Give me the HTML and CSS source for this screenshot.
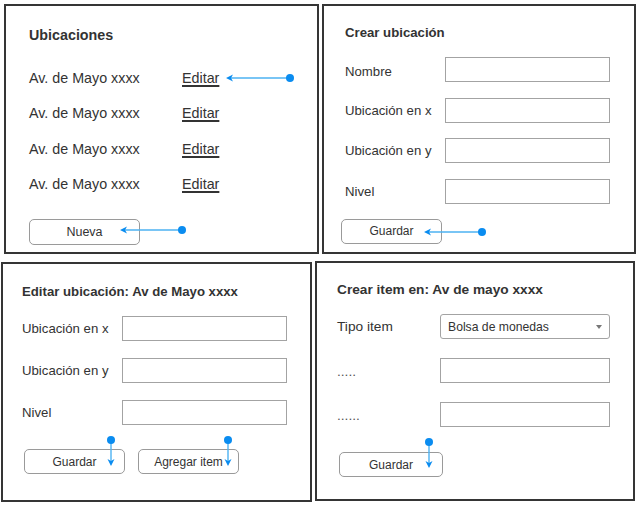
FILE: index.html
```html
<!DOCTYPE html>
<html lang="es">
<head>
  <meta charset="UTF-8">
  <meta name="viewport" content="width=device-width, initial-scale=1.0">
  <title>Ubicaciones — bocetos</title>
  <link rel="stylesheet" href="styles.css">
</head>
<body>
  <div class="board">
    <div class="row row-top">
      <!-- Listado -->
      <section class="panel panel-list">
        <h2 class="panel-title">Ubicaciones</h2>
        <ul class="place-list">
          <li><span>Av. de Mayo xxxx</span><a href="#">Editar</a></li>
          <li><span>Av. de Mayo xxxx</span><a href="#">Editar</a></li>
          <li><span>Av. de Mayo xxxx</span><a href="#">Editar</a></li>
          <li><span>Av. de Mayo xxxx</span><a href="#">Editar</a></li>
        </ul>
        <button class="btn btn-new">Nueva</button>
        <svg class="arrow arrow-edit" width="70" height="10" viewBox="0 0 70 10">
          <line x1="7" y1="5" x2="66" y2="5"/>
          <polygon points="2,5 9,1.5 7,5 9,8.5"/>
          <circle cx="66" cy="5" r="4"/>
        </svg>
        <svg class="arrow arrow-new" width="68" height="10" viewBox="0 0 68 10">
          <line x1="7" y1="5" x2="64" y2="5"/>
          <polygon points="2,5 9,1.5 7,5 9,8.5"/>
          <circle cx="64" cy="5" r="4"/>
        </svg>
      </section>

      <!-- Alta -->
      <section class="panel panel-create">
        <h2 class="panel-title">Crear ubicación</h2>
        <div class="form-grid">
          <label class="first">Nombre</label><input type="text">
          <label>Ubicación en x</label><input type="text">
          <label>Ubicación en y</label><input type="text">
          <label>Nivel</label><input type="text">
        </div>
        <button class="btn btn-save">Guardar</button>
        <svg class="arrow arrow-save" width="64" height="10" viewBox="0 0 64 10">
          <line x1="7" y1="5" x2="60" y2="5"/>
          <polygon points="2,5 9,1.5 7,5 9,8.5"/>
          <circle cx="60" cy="5" r="4"/>
        </svg>
      </section>
    </div>

    <div class="row row-bottom">
      <!-- Edición -->
      <section class="panel panel-edit">
        <h2 class="panel-title">Editar ubicación: Av de Mayo xxxx</h2>
        <div class="form-grid">
          <label>Ubicación en x</label><input type="text">
          <label>Ubicación en y</label><input type="text">
          <label>Nivel</label><input type="text">
        </div>
        <div class="actions">
          <button class="btn">Guardar</button>
          <button class="btn">Agregar item</button>
        </div>
        <svg class="arrow arrow-down arrow-edit-save" width="10" height="32" viewBox="0 0 10 32">
          <line x1="5" y1="4" x2="5" y2="25"/>
          <polygon points="5,30 1.5,23 5,25 8.5,23"/>
          <circle cx="5" cy="4" r="4"/>
        </svg>
        <svg class="arrow arrow-down arrow-add-item" width="10" height="32" viewBox="0 0 10 32">
          <line x1="5" y1="4" x2="5" y2="25"/>
          <polygon points="5,30 1.5,23 5,25 8.5,23"/>
          <circle cx="5" cy="4" r="4"/>
        </svg>
      </section>

      <!-- Item -->
      <section class="panel panel-item">
        <h2 class="panel-title">Crear item en: Av de mayo xxxx</h2>
        <div class="form-grid">
          <label>Tipo item</label>
          <div class="select"><span>Bolsa de monedas</span><i class="caret"></i></div>
          <label class="muted">.....</label><input type="text">
          <label class="muted">......</label><input type="text">
        </div>
        <button class="btn btn-item">Guardar</button>
        <svg class="arrow arrow-down arrow-item-save" width="10" height="32" viewBox="0 0 10 32">
          <line x1="5" y1="4" x2="5" y2="25"/>
          <polygon points="5,30 1.5,23 5,25 8.5,23"/>
          <circle cx="5" cy="4" r="4"/>
        </svg>
      </section>
    </div>
  </div>
</body>
</html>
```

FILE: styles.css
```css
body {
  margin: 0;
  background: #fff;
  color: #333;
  font-family: 'Liberation Sans', Arial, sans-serif;
}
.board {
  display: flex;
  flex-direction: column;
  padding-top: 4px;
}
.row {
  display: flex;
  gap: 3px;
  align-items: flex-start;
}
.row-top {
  margin-left: 4px;
}
.row-bottom {
  margin-left: 1px;
  margin-top: 8px;
}
.panel {
  position: relative;
  box-sizing: border-box;
  border: 2px solid #353535;
  background: #fff;
}
.panel-title {
  margin: 0;
  font-size: 13.2px;
  font-weight: bold;
  line-height: 18px;
  color: #333;
}

/* listado */
.panel-list {
  width: 315px;
  height: 250px;
  padding: 19px 0 0 23px;
}
.panel-list .panel-title {
  font-size: 14.3px;
  line-height: 20px;
}
.place-list {
  list-style: none;
  margin: 16px 0 0;
  padding: 0;
}
.place-list li {
  display: grid;
  grid-template-columns: 153px auto;
  font-size: 14.3px;
  line-height: 35.3px;
}
.place-list a {
  color: #333;
  text-decoration: underline;
  text-decoration-thickness: 1.5px;
  text-underline-offset: 2px;
}

/* formularios */
.form-grid {
  display: grid;
  align-items: center;
  margin-top: 15px;
  font-size: 13.2px;
}
.form-grid input {
  box-sizing: border-box;
  height: 25px;
  margin: 0;
  border: 1px solid #a3a3a3;
  border-radius: 0;
  background: #fff;
}
.form-grid .first {
  padding-top: 4px;
}
.panel-create {
  width: 314px;
  height: 250px;
  padding: 18px 0 0 21px;
}
.panel-create .form-grid {
  grid-template-columns: 100px 165px;
  row-gap: 15.5px;
}
.panel-edit {
  width: 311px;
  height: 240px;
  padding: 19px 0 0 19px;
}
.panel-edit .form-grid {
  grid-template-columns: 100px 165px;
  row-gap: 17px;
}
.panel-item {
  width: 320px;
  height: 240px;
  margin-top: -1px;
  padding: 18px 0 0 20px;
}
.panel-item .panel-title {
  font-size: 13.7px;
}
.panel-item .form-grid {
  grid-template-columns: 103px 170px;
  row-gap: 19px;
  font-size: 13.7px;
}
.muted {
  color: #555;
  padding-top: 2px;
}
.select {
  box-sizing: border-box;
  height: 25px;
  display: flex;
  align-items: center;
  justify-content: space-between;
  padding: 0 7px;
  border: 1px solid #a3a3a3;
  border-radius: 3px;
  font-size: 12.2px;
}
.caret {
  width: 0;
  height: 0;
  border-left: 3px solid transparent;
  border-right: 3px solid transparent;
  border-top: 4px solid #777;
}

/* botones */
.btn {
  box-sizing: border-box;
  width: 101px;
  height: 25px;
  padding: 0;
  border: 1px solid #9a9a9a;
  border-radius: 5px;
  background: #fff;
  color: #333;
  font-family: inherit;
  font-size: 12px;
}
.btn-new {
  width: 111px;
  height: 26px;
  margin-top: 17px;
  font-size: 12.5px;
}
.btn-save {
  margin-top: 15px;
  margin-left: -4px;
}
.actions {
  display: flex;
  gap: 13px;
  margin-top: 24px;
  margin-left: 2px;
}
.btn-item {
  width: 104px;
  margin-top: 25px;
  margin-left: 2px;
}

/* flechas de anotación */
.arrow {
  position: absolute;
  overflow: visible;
}
.arrow line {
  stroke: #4db2f2;
  stroke-width: 1.4;
}
.arrow polygon,
.arrow circle {
  fill: #0a8cf0;
}
.arrow-edit { left: 218px; top: 67px; }
.arrow-new { left: 112px; top: 219px; }
.arrow-save { left: 98px; top: 221px; }
.arrow-edit-save { left: 103px; top: 172px; }
.arrow-add-item { left: 220px; top: 172px; }
.arrow-item-save { left: 107px; top: 175px; }
```
